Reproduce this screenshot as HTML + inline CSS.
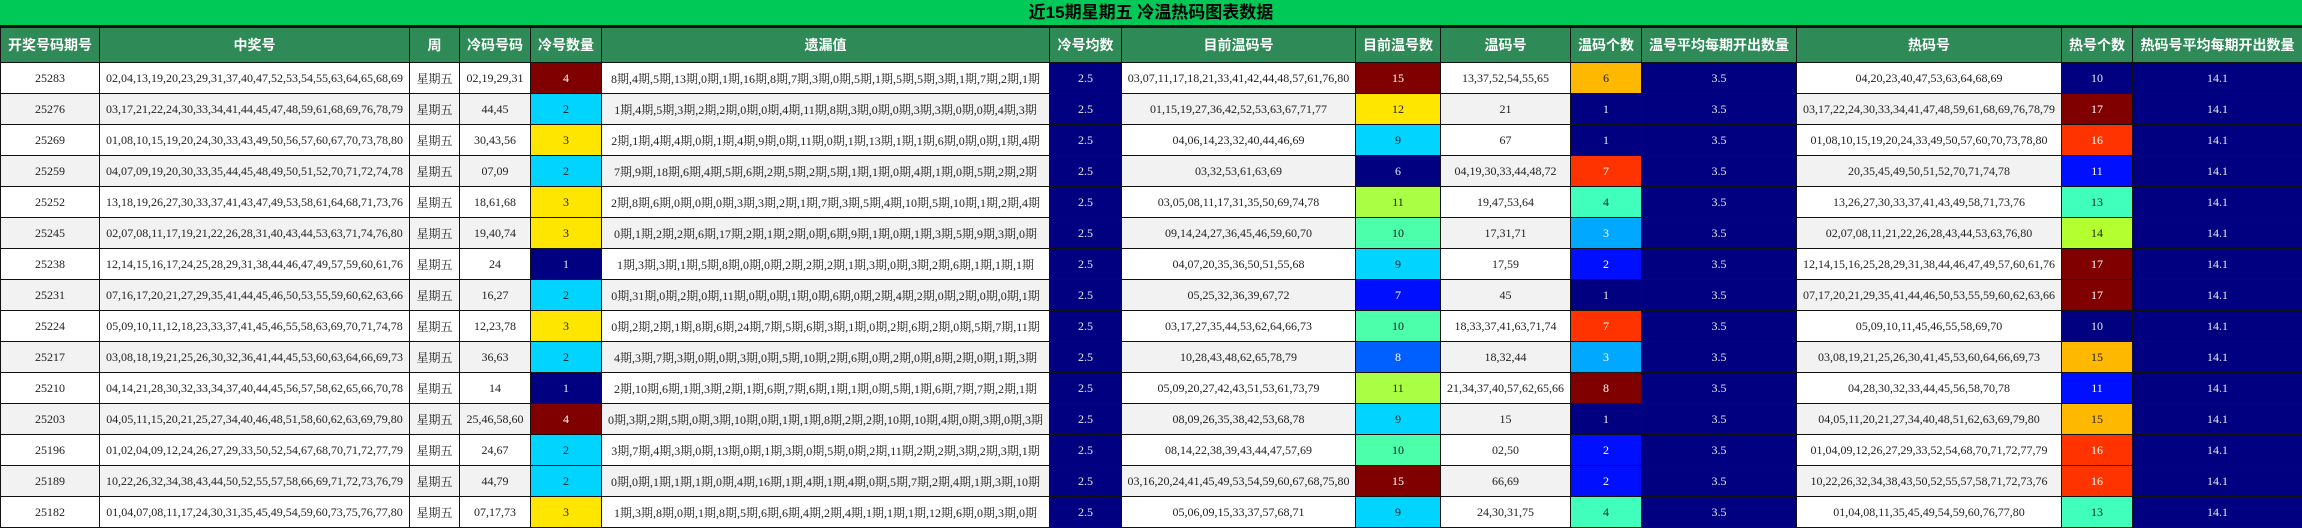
<!DOCTYPE html>
<html><head><meta charset="utf-8"><style>
*{margin:0;padding:0;box-sizing:border-box}
body{width:2302px;height:528px;overflow:hidden;background:#fff;font-family:"Liberation Serif","Noto Serif CJK SC","Noto Sans CJK SC",serif;}
.title{height:27px;background:#00C957;border-bottom:2px solid #111;text-align:center;font:bold 17px/25px "Liberation Sans","Noto Sans CJK SC",sans-serif;color:#000;}
table{border-collapse:collapse;table-layout:fixed;width:2302px;}
th{background:#2E8B57;color:#fff;font:bold 14px "Liberation Sans","Noto Sans CJK SC",sans-serif;height:35px;border:1px solid #111;white-space:nowrap;overflow:hidden}
td{height:31px;border:1px solid #111;text-align:center;font-size:12px;color:#222;white-space:nowrap;overflow:hidden}
tbody tr:nth-child(odd) td{background:#fff}
tbody tr:nth-child(even) td{background:#F2F2F2}
tbody tr td.n{background:#000080;color:#e8e8f0}
tbody tr td.m{background:#800000;color:#fff}
tbody tr td.c{background:#00D4FF}
tbody tr td.y{background:#FFE600}
tbody tr td.o{background:#FFB800}
tbody tr td.r{background:#FF3300;color:#fff}
tbody tr td.b{background:#0010FF;color:#fff}
tbody tr td.b8{background:#0060FF;color:#fff}
tbody tr td.s{background:#00A8FF;color:#fff}
tbody tr td.l{background:#AAFF44}
tbody tr td.l2{background:#B4FF30}
tbody tr td.mt{background:#4CFFAA}
tbody tr td.a{background:#40FFBC}
</style></head><body>
<div class="title">近15期星期五 冷温热码图表数据</div>
<table>
<colgroup><col style="width:99px"><col style="width:310px"><col style="width:50px"><col style="width:71px"><col style="width:71px"><col style="width:448px"><col style="width:72px"><col style="width:234px"><col style="width:85px"><col style="width:130px"><col style="width:71px"><col style="width:155px"><col style="width:265px"><col style="width:71px"><col style="width:170px"></colgroup>
<thead><tr><th>开奖号码期号</th><th>中奖号</th><th>周</th><th>冷码号码</th><th>冷号数量</th><th>遗漏值</th><th>冷号均数</th><th>目前温码号</th><th>目前温号数</th><th>温码号</th><th>温码个数</th><th>温号平均每期开出数量</th><th>热码号</th><th>热号个数</th><th>热码号平均每期开出数量</th></tr></thead>
<tbody>
<tr><td>25283</td><td>02,04,13,19,20,23,29,31,37,40,47,52,53,54,55,63,64,65,68,69</td><td>星期五</td><td>02,19,29,31</td><td class="m">4</td><td>8期,4期,5期,13期,0期,1期,16期,8期,7期,3期,0期,5期,1期,5期,5期,3期,1期,7期,2期,1期</td><td class="n">2.5</td><td>03,07,11,17,18,21,33,41,42,44,48,57,61,76,80</td><td class="m">15</td><td>13,37,52,54,55,65</td><td class="o">6</td><td class="n">3.5</td><td>04,20,23,40,47,53,63,64,68,69</td><td class="n">10</td><td class="n">14.1</td></tr>
<tr><td>25276</td><td>03,17,21,22,24,30,33,34,41,44,45,47,48,59,61,68,69,76,78,79</td><td>星期五</td><td>44,45</td><td class="c">2</td><td>1期,4期,5期,3期,2期,2期,0期,0期,4期,11期,8期,3期,0期,0期,3期,3期,0期,0期,4期,3期</td><td class="n">2.5</td><td>01,15,19,27,36,42,52,53,63,67,71,77</td><td class="y">12</td><td>21</td><td class="n">1</td><td class="n">3.5</td><td>03,17,22,24,30,33,34,41,47,48,59,61,68,69,76,78,79</td><td class="m">17</td><td class="n">14.1</td></tr>
<tr><td>25269</td><td>01,08,10,15,19,20,24,30,33,43,49,50,56,57,60,67,70,73,78,80</td><td>星期五</td><td>30,43,56</td><td class="y">3</td><td>2期,1期,4期,4期,0期,1期,4期,9期,0期,11期,0期,1期,13期,1期,1期,6期,0期,0期,1期,4期</td><td class="n">2.5</td><td>04,06,14,23,32,40,44,46,69</td><td class="c">9</td><td>67</td><td class="n">1</td><td class="n">3.5</td><td>01,08,10,15,19,20,24,33,49,50,57,60,70,73,78,80</td><td class="r">16</td><td class="n">14.1</td></tr>
<tr><td>25259</td><td>04,07,09,19,20,30,33,35,44,45,48,49,50,51,52,70,71,72,74,78</td><td>星期五</td><td>07,09</td><td class="c">2</td><td>7期,9期,18期,6期,4期,5期,6期,2期,5期,2期,5期,1期,1期,0期,4期,1期,0期,5期,2期,2期</td><td class="n">2.5</td><td>03,32,53,61,63,69</td><td class="n">6</td><td>04,19,30,33,44,48,72</td><td class="r">7</td><td class="n">3.5</td><td>20,35,45,49,50,51,52,70,71,74,78</td><td class="b">11</td><td class="n">14.1</td></tr>
<tr><td>25252</td><td>13,18,19,26,27,30,33,37,41,43,47,49,53,58,61,64,68,71,73,76</td><td>星期五</td><td>18,61,68</td><td class="y">3</td><td>2期,8期,6期,0期,0期,0期,3期,3期,2期,1期,7期,3期,5期,4期,10期,5期,10期,1期,2期,4期</td><td class="n">2.5</td><td>03,05,08,11,17,31,35,50,69,74,78</td><td class="l">11</td><td>19,47,53,64</td><td class="a">4</td><td class="n">3.5</td><td>13,26,27,30,33,37,41,43,49,58,71,73,76</td><td class="a">13</td><td class="n">14.1</td></tr>
<tr><td>25245</td><td>02,07,08,11,17,19,21,22,26,28,31,40,43,44,53,63,71,74,76,80</td><td>星期五</td><td>19,40,74</td><td class="y">3</td><td>0期,1期,2期,2期,6期,17期,2期,1期,2期,0期,6期,9期,1期,0期,1期,3期,5期,9期,3期,0期</td><td class="n">2.5</td><td>09,14,24,27,36,45,46,59,60,70</td><td class="mt">10</td><td>17,31,71</td><td class="s">3</td><td class="n">3.5</td><td>02,07,08,11,21,22,26,28,43,44,53,63,76,80</td><td class="l2">14</td><td class="n">14.1</td></tr>
<tr><td>25238</td><td>12,14,15,16,17,24,25,28,29,31,38,44,46,47,49,57,59,60,61,76</td><td>星期五</td><td>24</td><td class="n">1</td><td>1期,3期,3期,1期,5期,8期,0期,0期,2期,2期,2期,1期,3期,0期,3期,2期,6期,1期,1期,1期</td><td class="n">2.5</td><td>04,07,20,35,36,50,51,55,68</td><td class="c">9</td><td>17,59</td><td class="b">2</td><td class="n">3.5</td><td>12,14,15,16,25,28,29,31,38,44,46,47,49,57,60,61,76</td><td class="m">17</td><td class="n">14.1</td></tr>
<tr><td>25231</td><td>07,16,17,20,21,27,29,35,41,44,45,46,50,53,55,59,60,62,63,66</td><td>星期五</td><td>16,27</td><td class="c">2</td><td>0期,31期,0期,2期,0期,11期,0期,0期,1期,0期,6期,0期,2期,4期,2期,0期,2期,0期,0期,1期</td><td class="n">2.5</td><td>05,25,32,36,39,67,72</td><td class="b">7</td><td>45</td><td class="n">1</td><td class="n">3.5</td><td>07,17,20,21,29,35,41,44,46,50,53,55,59,60,62,63,66</td><td class="m">17</td><td class="n">14.1</td></tr>
<tr><td>25224</td><td>05,09,10,11,12,18,23,33,37,41,45,46,55,58,63,69,70,71,74,78</td><td>星期五</td><td>12,23,78</td><td class="y">3</td><td>0期,2期,2期,1期,8期,6期,24期,7期,5期,6期,3期,1期,0期,2期,6期,2期,0期,5期,7期,11期</td><td class="n">2.5</td><td>03,17,27,35,44,53,62,64,66,73</td><td class="mt">10</td><td>18,33,37,41,63,71,74</td><td class="r">7</td><td class="n">3.5</td><td>05,09,10,11,45,46,55,58,69,70</td><td class="n">10</td><td class="n">14.1</td></tr>
<tr><td>25217</td><td>03,08,18,19,21,25,26,30,32,36,41,44,45,53,60,63,64,66,69,73</td><td>星期五</td><td>36,63</td><td class="c">2</td><td>4期,3期,7期,3期,0期,0期,3期,0期,5期,10期,2期,6期,0期,2期,0期,8期,2期,0期,1期,3期</td><td class="n">2.5</td><td>10,28,43,48,62,65,78,79</td><td class="b8">8</td><td>18,32,44</td><td class="s">3</td><td class="n">3.5</td><td>03,08,19,21,25,26,30,41,45,53,60,64,66,69,73</td><td class="o">15</td><td class="n">14.1</td></tr>
<tr><td>25210</td><td>04,14,21,28,30,32,33,34,37,40,44,45,56,57,58,62,65,66,70,78</td><td>星期五</td><td>14</td><td class="n">1</td><td>2期,10期,6期,1期,3期,2期,1期,6期,7期,6期,1期,1期,0期,5期,1期,6期,7期,7期,2期,1期</td><td class="n">2.5</td><td>05,09,20,27,42,43,51,53,61,73,79</td><td class="l">11</td><td>21,34,37,40,57,62,65,66</td><td class="m">8</td><td class="n">3.5</td><td>04,28,30,32,33,44,45,56,58,70,78</td><td class="b">11</td><td class="n">14.1</td></tr>
<tr><td>25203</td><td>04,05,11,15,20,21,25,27,34,40,46,48,51,58,60,62,63,69,79,80</td><td>星期五</td><td>25,46,58,60</td><td class="m">4</td><td>0期,3期,2期,5期,0期,3期,10期,0期,1期,1期,8期,2期,2期,10期,10期,4期,0期,3期,0期,3期</td><td class="n">2.5</td><td>08,09,26,35,38,42,53,68,78</td><td class="c">9</td><td>15</td><td class="n">1</td><td class="n">3.5</td><td>04,05,11,20,21,27,34,40,48,51,62,63,69,79,80</td><td class="o">15</td><td class="n">14.1</td></tr>
<tr><td>25196</td><td>01,02,04,09,12,24,26,27,29,33,50,52,54,67,68,70,71,72,77,79</td><td>星期五</td><td>24,67</td><td class="c">2</td><td>3期,7期,4期,3期,0期,13期,0期,1期,3期,0期,5期,0期,2期,11期,2期,2期,3期,2期,3期,1期</td><td class="n">2.5</td><td>08,14,22,38,39,43,44,47,57,69</td><td class="mt">10</td><td>02,50</td><td class="b">2</td><td class="n">3.5</td><td>01,04,09,12,26,27,29,33,52,54,68,70,71,72,77,79</td><td class="r">16</td><td class="n">14.1</td></tr>
<tr><td>25189</td><td>10,22,26,32,34,38,43,44,50,52,55,57,58,66,69,71,72,73,76,79</td><td>星期五</td><td>44,79</td><td class="c">2</td><td>0期,0期,1期,1期,1期,0期,4期,16期,1期,4期,1期,4期,0期,5期,7期,2期,4期,1期,3期,10期</td><td class="n">2.5</td><td>03,16,20,24,41,45,49,53,54,59,60,67,68,75,80</td><td class="m">15</td><td>66,69</td><td class="b">2</td><td class="n">3.5</td><td>10,22,26,32,34,38,43,50,52,55,57,58,71,72,73,76</td><td class="r">16</td><td class="n">14.1</td></tr>
<tr><td>25182</td><td>01,04,07,08,11,17,24,30,31,35,45,49,54,59,60,73,75,76,77,80</td><td>星期五</td><td>07,17,73</td><td class="y">3</td><td>1期,3期,8期,0期,1期,8期,5期,6期,6期,4期,2期,4期,1期,1期,1期,12期,6期,0期,3期,0期</td><td class="n">2.5</td><td>05,06,09,15,33,37,57,68,71</td><td class="c">9</td><td>24,30,31,75</td><td class="a">4</td><td class="n">3.5</td><td>01,04,08,11,35,45,49,54,59,60,76,77,80</td><td class="a">13</td><td class="n">14.1</td></tr>
</tbody></table>
</body></html>
